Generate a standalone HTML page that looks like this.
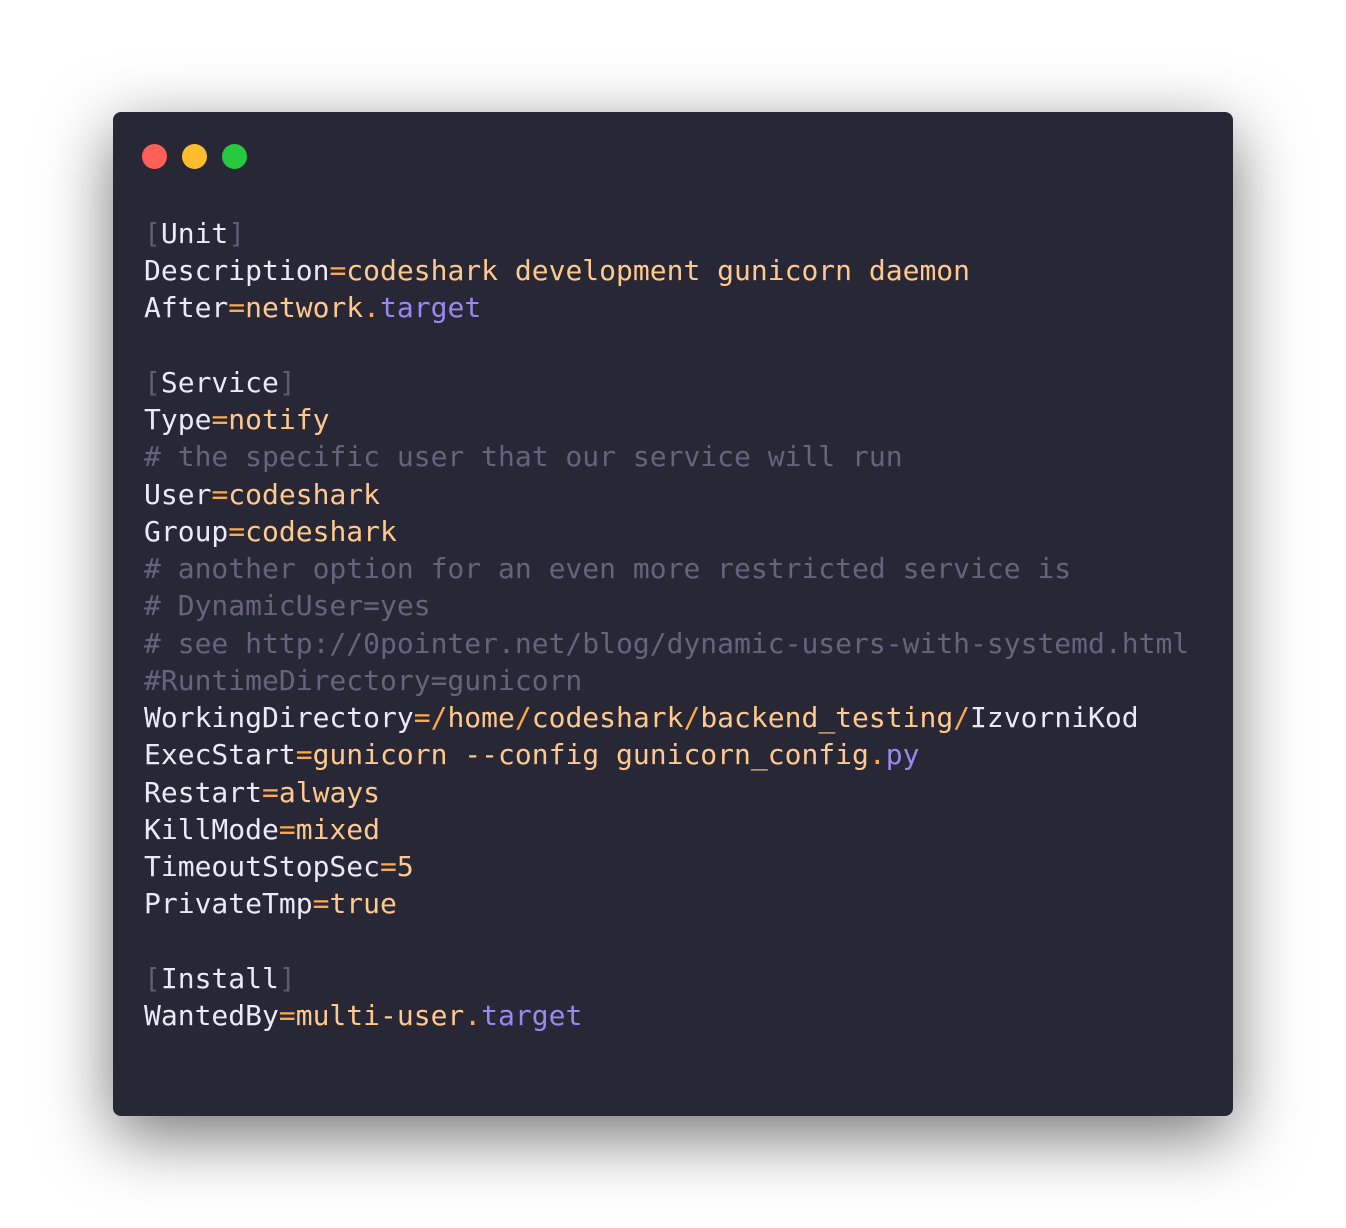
<!DOCTYPE html>
<html><head><meta charset="utf-8"><style>
html,body{margin:0;padding:0;background:#fff;width:1346px;height:1228px;overflow:hidden}
.win{position:absolute;left:113px;top:112px;width:1120px;height:1004px;background:#282735;border-radius:8px;box-shadow:0 20px 68px rgba(0,0,0,0.55)}
.dot{position:absolute;top:144px;width:25px;height:25px;border-radius:50%}
pre{position:absolute;left:144px;top:215px;margin:0;font-family:"DejaVu Sans Mono","Liberation Mono",monospace;font-size:28px;line-height:37.24px;color:#ebe9f5;white-space:pre}
.b{color:#5f5c74}.e{color:#ffa84d}.o{color:#ffc98e}.p{color:#9a88f0}.c{color:#66637c}
</style></head><body>
<div class="win"></div>
<div class="dot" style="left:142px;background:#ff5f56"></div>
<div class="dot" style="left:182px;background:#ffbd2e"></div>
<div class="dot" style="left:222px;background:#27c93f"></div>
<pre><span class="b">[</span>Unit<span class="b">]</span>
Description<span class="e">=</span><span class="o">codeshark development gunicorn daemon</span>
After<span class="e">=</span><span class="o">network</span><span class="e">.</span><span class="p">target</span>

<span class="b">[</span>Service<span class="b">]</span>
Type<span class="e">=</span><span class="o">notify</span>
<span class="c"># the specific user that our service will run</span>
User<span class="e">=</span><span class="o">codeshark</span>
Group<span class="e">=</span><span class="o">codeshark</span>
<span class="c"># another option for an even more restricted service is</span>
<span class="c"># DynamicUser=yes</span>
<span class="c"># see http://0pointer.net/blog/dynamic-users-with-systemd.html</span>
<span class="c">#RuntimeDirectory=gunicorn</span>
WorkingDirectory<span class="e">=/</span><span class="o">home</span><span class="e">/</span><span class="o">codeshark</span><span class="e">/</span><span class="o">backend_testing</span><span class="e">/</span>IzvorniKod
ExecStart<span class="e">=</span><span class="o">gunicorn --config gunicorn_config</span><span class="e">.</span><span class="p">py</span>
Restart<span class="e">=</span><span class="o">always</span>
KillMode<span class="e">=</span><span class="o">mixed</span>
TimeoutStopSec<span class="e">=</span><span class="o">5</span>
PrivateTmp<span class="e">=</span><span class="o">true</span>

<span class="b">[</span>Install<span class="b">]</span>
WantedBy<span class="e">=</span><span class="o">multi-user</span><span class="e">.</span><span class="p">target</span></pre>
</body></html>
